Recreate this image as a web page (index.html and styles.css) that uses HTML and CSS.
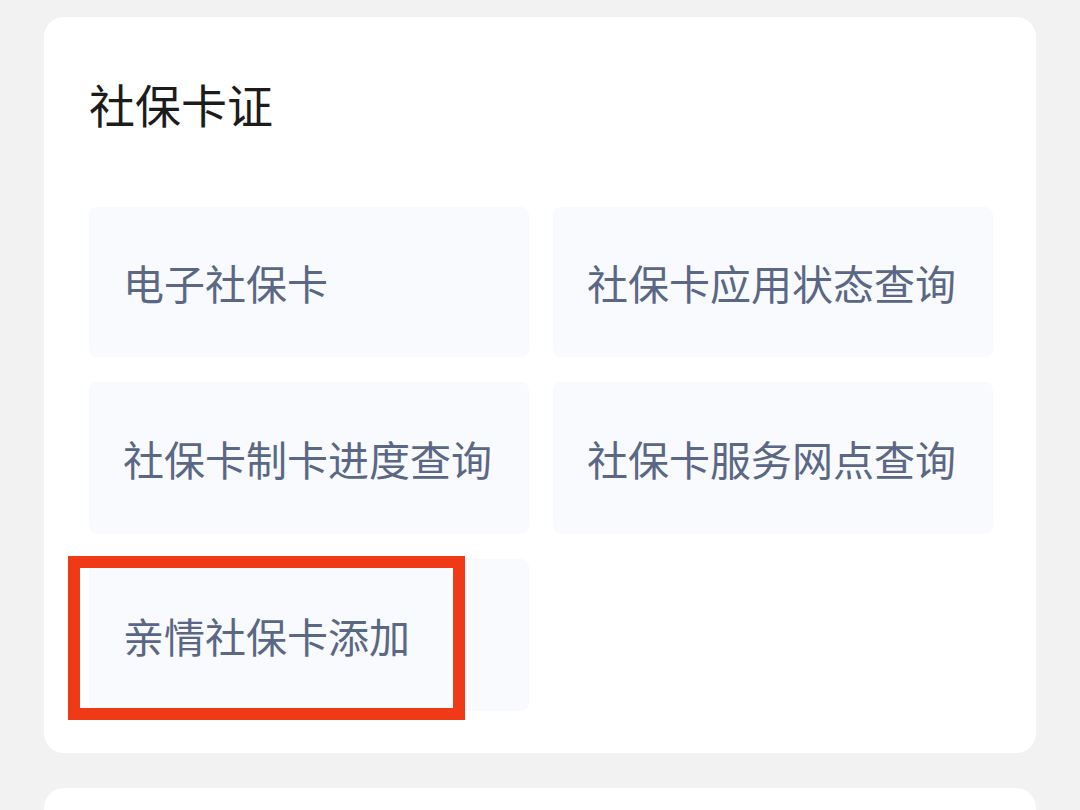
FILE: index.html
```html
<!DOCTYPE html>
<html lang="zh-CN">
<head>
<meta charset="utf-8">
<title>社保卡证</title>
<link rel="stylesheet" href="styles.css">
</head>
<body>
<div class="page">
  <section class="card">
    <h2 class="card-title">社保卡证</h2>
    <div class="grid">
      <div class="tile">电子社保卡</div>
      <div class="tile">社保卡应用状态查询</div>
      <div class="tile">社保卡制卡进度查询</div>
      <div class="tile">社保卡服务网点查询</div>
      <div class="tile tile-marked">亲情社保卡添加<span class="mark"></span></div>
    </div>
  </section>
  <section class="card card-next"></section>
</div>
</body>
</html>
```

FILE: styles.css
```css
html, body {
  margin: 0;
  padding: 0;
  background: #f2f2f2;
  font-family: "Noto Sans CJK SC", "Noto Sans", sans-serif;
}
.page {
  width: 1080px;
  height: 810px;
  overflow: hidden;
  padding: 17px 44px 0 44px;
  box-sizing: border-box;
  display: flex;
  flex-direction: column;
  gap: 35px;
}
.card {
  background: #ffffff;
  border-radius: 20px;
  padding: 63px 43px 42px 45px;
  flex-shrink: 0;
}
.card-title {
  margin: 0;
  font-size: 46px;
  line-height: 47px;
  font-weight: 400;
  color: #1c1c1c;
}
.grid {
  margin-top: 80px;
  display: grid;
  grid-template-columns: 440px 440px;
  column-gap: 24px;
  row-gap: 25px;
}
.tile {
  height: 150px;
  background: #f8fafd;
  border-radius: 8px;
  display: flex;
  align-items: center;
  padding-left: 34px;
  font-size: 41px;
  color: #5a6785;
  position: relative;
}
.grid .tile:nth-child(n+3) {
  height: 152px;
}
.mark {
  position: absolute;
  left: -21px;
  top: -3px;
  width: 397px;
  height: 164px;
  border: 12px solid #f03a17;
  box-sizing: border-box;
}
.card-next {
  height: 120px;
  padding: 0;
}
```
